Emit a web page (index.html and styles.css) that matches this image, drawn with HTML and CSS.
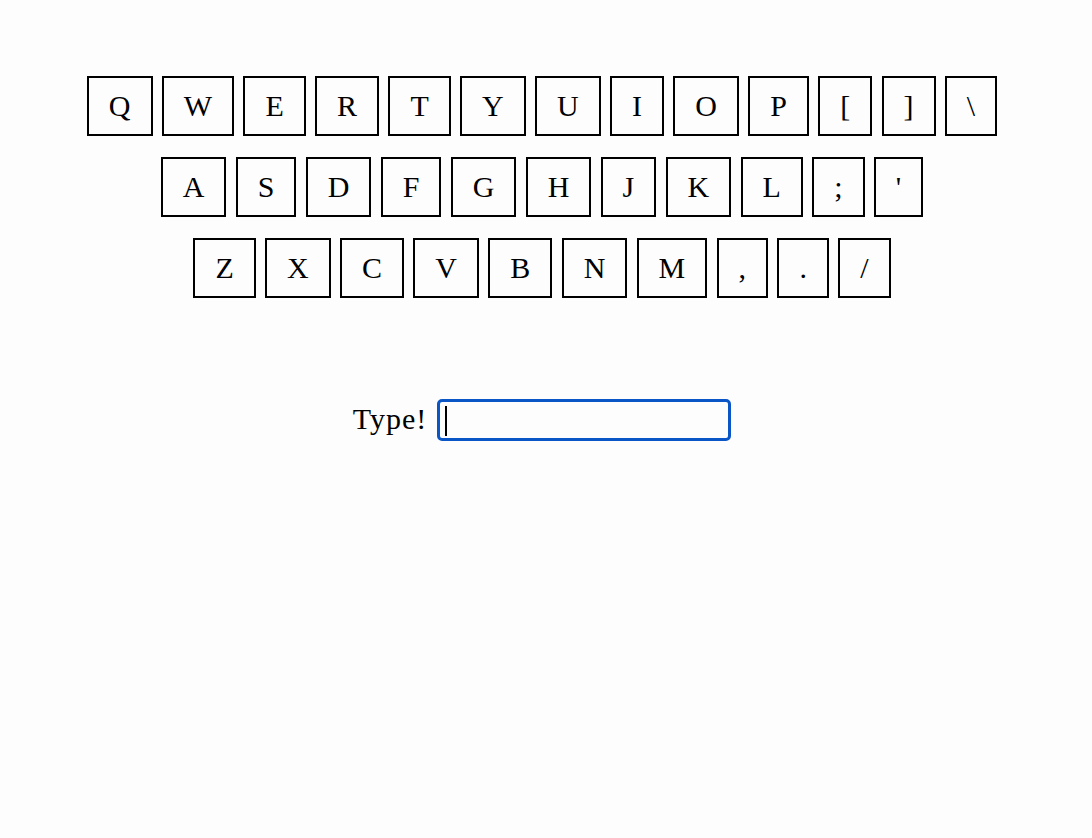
FILE: index.html
```html
<!DOCTYPE html>
<html>
<head>
<meta charset="utf-8">
<title>Keyboard</title>
<link rel="stylesheet" href="styles.css">
</head>
<body>
<main class="page">
  <section class="keyboard">
    <div class="row">
      <span class="key">Q</span><span class="key">W</span><span class="key">E</span><span class="key">R</span><span class="key">T</span><span class="key">Y</span><span class="key">U</span><span class="key">I</span><span class="key">O</span><span class="key">P</span><span class="key">[</span><span class="key">]</span><span class="key">\</span>
    </div>
    <div class="row">
      <span class="key">A</span><span class="key">S</span><span class="key">D</span><span class="key">F</span><span class="key">G</span><span class="key">H</span><span class="key">J</span><span class="key">K</span><span class="key">L</span><span class="key">;</span><span class="key">'</span>
    </div>
    <div class="row">
      <span class="key">Z</span><span class="key">X</span><span class="key">C</span><span class="key">V</span><span class="key">B</span><span class="key">N</span><span class="key">M</span><span class="key">,</span><span class="key">.</span><span class="key">/</span>
    </div>
  </section>
  <label class="typer">
    <span class="typer-label">Type!</span>
    <span class="field"><input class="field-input" type="text" aria-label="Type"><span class="caret"></span></span>
  </label>
</main>
</body>
</html>
```
FILE: styles.css
```css
html, body {
  margin: 0;
  padding: 0;
  background: #fdfdfd;
}
body {
  font-family: "Liberation Serif", "Times New Roman", serif;
  color: #000;
}
.page {
  padding: 76px 8px 0 0;
  display: flex;
  flex-direction: column;
  align-items: center;
}
.keyboard {
  display: flex;
  flex-direction: column;
  gap: 21px;
}
.row {
  display: flex;
  justify-content: center;
  gap: 9.3px;
}
.key {
  display: block;
  border: 2px solid #000;
  font-size: 30px;
  line-height: 34px;
  padding: 11px 20px;
  text-align: center;
}
.typer {
  margin-top: 101px;
  display: flex;
  align-items: center;
  gap: 10px;
  font-size: 30px;
}
.typer-label {
  line-height: 34px;
  margin-top: -3px;
  letter-spacing: 1px;
}
.field {
  position: relative;
  display: block;
  width: 294px;
  height: 42px;
  box-sizing: border-box;
}
.field-input {
  display: block;
  box-sizing: border-box;
  width: 100%;
  height: 100%;
  margin: 0;
  padding: 0 6px;
  border: 3px solid #0b56c6;
  border-radius: 5px;
  background: #fdfdfd;
  font: 30px "Liberation Serif", serif;
  outline: none;
  caret-color: transparent;
}
.caret {
  position: absolute;
  left: 8px;
  top: 7px;
  width: 2px;
  height: 30px;
  background: #000;
}
```
